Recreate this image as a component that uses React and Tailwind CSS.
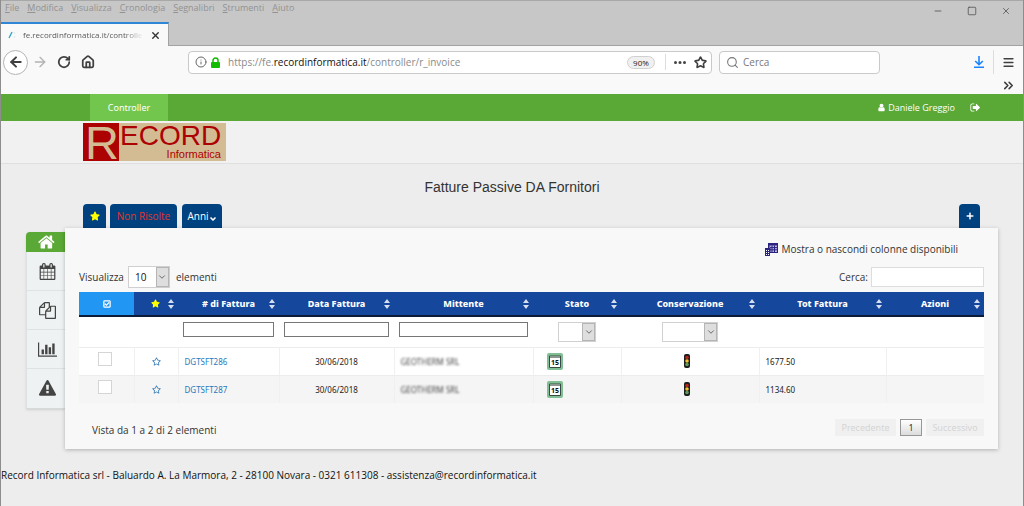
import { FaStar, FaRegStar, FaPlus, FaRegCheckSquare } from 'react-icons/fa';
import {
  ArrowLeft,
  ArrowRight,
  RotateCw,
  ChevronDown,
  ChevronsRight,
  Home,
  Info,
  Menu,
  Minus,
  Search,
  Square,
  Star,
  X,
} from 'lucide-react';

const PATHS = {
  home: 'M1408 992v480q0 26-19 45t-45 19h-384v-384h-256v384h-384q-26 0-45-19t-19-45v-480q0-1 .5-3t.5-3l575-474 575 474q1 2 1 6zm223-69l-62 74q-8 9-21 11h-3q-13 0-21-7l-692-577-692 577q-12 8-24 7-13-2-21-11l-62-74q-8-10-7-23.5t11-21.5l719-599q32-26 76-26t76 26l244 204v-195q0-14 9-23t23-9h192q14 0 23 9t9 23v408l219 182q10 8 11 21.5t-7 23.5z',
  calendar:
    'M192 1664h288v-288h-288v288zm352 0h320v-288h-320v288zm-352-352h288v-320h-288v320zm352 0h320v-320h-320v320zm-352-384h288v-288h-288v288zm736 736h320v-288h-320v288zm-384-736h320v-288h-320v288zm768 736h288v-288h-288v288zm-384-352h320v-320h-320v320zm-352-864v-288q0-13-9.5-22.5t-22.5-9.5h-64q-13 0-22.5 9.5t-9.5 22.5v288q0 13 9.5 22.5t22.5 9.5h64q13 0 22.5-9.5t9.5-22.5zm736 864h288v-320h-288v320zm-384-384h320v-288h-320v288zm384 0h288v-288h-288v288zm32-480v-288q0-13-9.5-22.5t-22.5-9.5h-64q-13 0-22.5 9.5t-9.5 22.5v288q0 13 9.5 22.5t22.5 9.5h64q13 0 22.5-9.5t9.5-22.5zm384-64v1280q0 52-38 90t-90 38h-1408q-52 0-90-38t-38-90v-1280q0-52 38-90t90-38h128v-96q0-66 47-113t113-47h64q66 0 113 47t47 113v96h384v-96q0-66 47-113t113-47h64q66 0 113 47t47 113v96h128q52 0 90 38t38 90z',
  files:
    'M1696 384q40 0 68 28t28 68v1216q0 40-28 68t-68 28h-960q-40 0-68-28t-28-68v-288h-544q-40 0-68-28t-28-68v-672q0-40 20-88t48-76l408-408q28-28 76-48t88-20h416q40 0 68 28t28 68v328q68-40 128-40h416zm-544 213l-299 299h299v-299zm-640-384l-299 299h299v-299zm196 647l316-316v-416h-384v416q0 40-28 68t-68 28h-416v640h512v-256q0-40 20-88t48-76zm956 804v-1152h-384v416q0 40-28 68t-68 28h-416v640h896z',
  chart:
    'M640 896v512h-256v-512h256zm384-512v1024h-256v-1024h256zm1024 1152v128h-2048v-1536h128v1408h1920zm-640-896v768h-256v-768h256zm384-384v1152h-256v-1152h256z',
  warning:
    'M1024 1375v-190q0-14-9.5-23.5t-22.5-9.5h-192q-13 0-22.5 9.5t-9.5 23.5v190q0 14 9.5 23.5t22.5 9.5h192q13 0 22.5-9.5t9.5-23.5zm-2-374l18-459q0-12-10-19-13-11-24-11h-220q-11 0-24 11-10 7-10 21l17 457q0 10 10 16.5t24 6.5h185q14 0 23.5-6.5t10.5-16.5zm-14-934l768 1408q35 63-2 126-17 29-46.5 46t-63.5 17h-1536q-34 0-63.5-17t-46.5-46q-37-63-2-126l768-1408q17-31 47-49t65-18 65 18 47 49z',
  user: 'M1536 1399q0 109-62.5 187t-150.5 78h-854q-88 0-150.5-78t-62.5-187q0-85 8.5-160.5t31.5-152 58.5-131 94-89 134.5-34.5q131 128 313 128t313-128q76 0 134.5 34.5t94 89 58.5 131 31.5 152 8.5 160.5zm-256-887q0 159-112.5 271.5t-271.5 112.5-271.5-112.5-112.5-271.5 112.5-271.5 271.5-112.5 271.5 112.5 112.5 271.5z',
  signOut:
    'M704 1440q0 4 1 20t.5 26.5-3 23.5-10 19.5-20.5 6.5h-320q-119 0-203.5-84.5t-84.5-203.5v-704q0-119 84.5-203.5t203.5-84.5h320q13 0 22.5 9.5t9.5 22.5q0 4 1 20t.5 26.5-3 23.5-10 19.5-20.5 6.5h-320q-66 0-113 47t-47 113v704q0 66 47 113t113 47h312l11.5 1 11.5 3 8 5.5 7 9 2 13.5zm928-544q0 26-19 45l-544 544q-19 19-45 19t-45-19-19-45v-288h-448q-26 0-45-19t-19-45v-384q0-26 19-45t45-19h448v-288q0-26 19-45t45-19 45 19l544 544q19 19 19 45z',
};

const MENU = ['File', 'Modifica', 'Visualizza', 'Cronologia', 'Segnalibri', 'Strumenti', 'Aiuto'];

const SIDEBAR = [
  { icon: 'calendar', label: 'Calendario' },
  { icon: 'files', label: 'Documenti' },
  { icon: 'chart', label: 'Statistiche' },
  { icon: 'warning', label: 'Avvisi' },
];

const COLUMNS = [
  { label: '# di Fattura', filter: 'text' },
  { label: 'Data Fattura', filter: 'text' },
  { label: 'Mittente', filter: 'text' },
  { label: 'Stato', filter: 'select', width: 'w-[38px]' },
  { label: 'Conservazione', filter: 'select', width: 'w-14' },
  { label: 'Tot Fattura' },
  { label: 'Azioni' },
];

const ROWS = [
  { id: 'DGTSFT286', date: '30/06/2018', sender: 'GEOTHERM SRL', total: '1677.50' },
  { id: 'DGTSFT287', date: '30/06/2018', sender: 'GEOTHERM SRL', total: '1134.60' },
];

function Glyph({ name, className }) {
  return (
    <svg viewBox={name === 'chart' ? '0 0 2048 1792' : '0 0 1792 1792'} fill="currentColor" className={className}>
      <path d={PATHS[name]} />
    </svg>
  );
}

function SortArrows() {
  return (
    <svg viewBox="0 0 6 10" className="w-[6px] h-[10px] shrink-0" fill="#d6def0">
      <path d="M3 0l3 4H0zM3 10l3-4H0z" />
    </svg>
  );
}

function SelectBox({ label, className, options }) {
  return (
    <span className={`relative inline-flex border border-[#d0d0d0] bg-white align-middle ${className}`}>
      <select
        aria-label={label}
        className="w-full h-full appearance-none bg-transparent pl-1.5 text-[10px] text-[#111]"
      >
        {options.map((option) => (
          <option key={option}>{option}</option>
        ))}
      </select>
      <span className="absolute right-0 inset-y-0 w-[13px] flex items-center justify-center bg-[#dedede] border border-[#b5b5b5] pointer-events-none">
        <ChevronDown className="w-[10px] h-[10px] text-[#555]" />
      </span>
    </span>
  );
}

function Logo() {
  return (
    <svg viewBox="0 0 143 38" className="w-[143px] h-[38px] overflow-visible" fontFamily="Liberation Sans, Arial, sans-serif">
      <rect width="143" height="38" fill="#d3bb93" />
      <rect width="36" height="38" fill="#ad0202" />
      <text x="2" y="36" fontSize="47" fill="#d3bb93">R</text>
      <text x="37" y="22" fontSize="28" fill="#ad0202">ECORD</text>
      <text x="138" y="35" fontSize="11" textAnchor="end" fill="#ad0202">Informatica</text>
    </svg>
  );
}

function BrowserChrome() {
  return (
    <header className="text-[#3f3f3f]">
      <div className="h-[46px] bg-[#c7c7c7] border-t border-t-[#a8a8a8] border-b border-b-[#a3a3a3] flex justify-between">
        <div className="flex flex-col justify-between">
          <nav className="flex gap-2 pl-1 pt-px text-[9px] leading-[12px] text-[#929292]">
            {MENU.map((item) => (
              <button key={item}>
                <span className="underline">{item[0]}</span>
                {item.slice(1)}
              </button>
            ))}
          </nav>
          <div className="w-[168px] h-6 -mb-px bg-[#f9f9fa] border-t-2 border-t-[#2f86d6] border-r border-r-[#a3a3a3] flex items-center px-[7px] gap-[7px] text-[8px] text-[#5a5a5a]">
            <svg viewBox="0 0 8 8" className="w-2 h-2 shrink-0" fill="none">
              <path d="M1 7L4 1" stroke="#35a8c4" strokeWidth="1.4" />
              <path d="M6 1l1 2M7 5L6 7" stroke="#d7e8ec" />
            </svg>
            <span className="flex-1 overflow-hidden whitespace-nowrap [mask-image:linear-gradient(to_right,black_85%,transparent)]">
              fe.recordinformatica.it/controller
            </span>
            <button aria-label="Chiudi scheda">
              <X className="w-[11px] h-[11px] text-[#333]" strokeWidth={3} />
            </button>
          </div>
        </div>
        <div className="flex gap-[24px] pr-3 pt-1 h-4 text-[#555]">
          <button aria-label="Riduci"><Minus className="w-[10px] h-[10px]" /></button>
          <button aria-label="Ingrandisci"><Square className="w-[10px] h-[10px]" /></button>
          <button aria-label="Chiudi"><X className="w-[10px] h-[10px]" /></button>
        </div>
      </div>

      <div className="bg-[#f9f9fa] h-12 flex flex-col">
        <div className="flex items-center h-8 pl-0.5 pr-2">
          <button aria-label="Indietro" className="w-[25px] h-[25px] shrink-0 rounded-full border border-[#b5b5b5] bg-white flex items-center justify-center">
            <ArrowLeft className="w-4 h-4" strokeWidth={3} />
          </button>
          <button aria-label="Avanti" className="ml-1 text-[#b2b2b2]"><ArrowRight className="w-4 h-4" /></button>
          <button aria-label="Ricarica" className="ml-[9px]"><RotateCw className="w-[14px] h-[14px]" strokeWidth={3} /></button>
          <button aria-label="Pagina iniziale" className="ml-[10px]"><Home className="w-[14px] h-[14px]" strokeWidth={3} /></button>

          <div className="ml-[93px] flex-1 h-[23px] bg-white border border-[#c9c9c9] rounded-sm flex items-center pl-1.5 pr-1">
            <Info className="w-3 h-3 text-[#666]" />
            <svg viewBox="0 0 9 11" className="w-[9px] h-[11px] ml-1 mr-2" fill="none">
              <path d="M2 6V3.5a2.5 2.5 0 015 0V6" stroke="#12bc00" strokeWidth="1.5" />
              <rect y="5" width="9" height="6" rx="1" fill="#12bc00" />
            </svg>
            <div className="flex-1 text-[10px] leading-[14px] text-[#8a8a8a] whitespace-nowrap">
              https://fe.<span className="text-[#111]">recordinformatica.it</span>/controller/r_invoice
            </div>
            <span className="w-7 h-[13px] rounded-full border border-[#d0d0d0] bg-[#f0f0f0] text-[8px] leading-[11px] text-center text-[#222]">
              90%
            </span>
            <span className="w-px h-4 bg-[#ddd] ml-[10px]" />
            <button aria-label="Azioni pagina" className="ml-2">
              <svg viewBox="0 0 12 3" className="w-3 h-[3px]" fill="#444">
                <circle cx="1.5" cy="1.5" r="1.5" />
                <circle cx="6" cy="1.5" r="1.5" />
                <circle cx="10.5" cy="1.5" r="1.5" />
              </svg>
            </button>
            <button aria-label="Aggiungi ai segnalibri" className="ml-2">
              <Star className="w-[13px] h-[13px]" strokeWidth={3} />
            </button>
          </div>
          <label className="ml-[7px] w-[161px] h-[23px] bg-white border border-[#c9c9c9] rounded-sm flex items-center pl-1.5 gap-1">
            <Search className="w-[13px] h-[13px] text-[#777] shrink-0" />
            <input aria-label="Cerca sul web" placeholder="Cerca" className="w-full text-[10px] placeholder:text-[#777] outline-none" />
          </label>
          <button aria-label="Download" className="ml-[94px]">
            <svg viewBox="0 0 10 12" className="w-[10px] h-3" fill="none" stroke="#1a84ff" strokeWidth="1.6">
              <path d="M5 0v8.5M1.2 5L5 8.7 8.8 5M0 11.2h10" />
            </svg>
          </button>
          <span className="w-px h-6 bg-[#ddd] ml-[9px]" />
          <button aria-label="Menu" className="ml-2"><Menu className="w-[13px] h-[13px]" strokeWidth={3} /></button>
        </div>
        <button aria-label="Altri strumenti" className="self-end mr-[7px]"><ChevronsRight className="w-[15px] h-[15px]" strokeWidth={2.5} /></button>
      </div>
    </header>
  );
}

function InvoiceTable() {
  return (
    <table className="w-full table-fixed border-collapse font-['Noto_Sans',sans-serif] text-[8px] leading-[12px] text-[#222]">
      <colgroup>
        <col className="w-[55px]" />
        <col className="w-[44px]" />
        <col className="w-[101px]" />
        <col className="w-[115px]" />
        <col className="w-[139px]" />
        <col className="w-[88px]" />
        <col className="w-[138px]" />
        <col className="w-[127px]" />
        <col className="w-[98px]" />
      </colgroup>
      <thead className="text-[9px]">
        <tr className="h-6 bg-[#15479c] text-white border-b-2 border-[#0b1b38]">
          <th className="bg-[#2196f3]">
            <FaRegCheckSquare className="w-2 h-2 mx-auto" stroke="currentColor" strokeWidth={30} />
          </th>
          <th>
            <div className="flex items-center justify-end gap-2 pr-1">
              <FaStar className="w-[9px] h-[9px] text-[#ffff00]" />
              <SortArrows />
            </div>
          </th>
          {COLUMNS.map(({ label }) => (
            <th key={label} className="font-extrabold">
              <div className="flex items-center pl-[10px] pr-1">
                <span className="flex-1">{label}</span>
                <SortArrows />
              </div>
            </th>
          ))}
        </tr>
        <tr className="h-[31px] bg-white">
          <td />
          <td />
          {COLUMNS.map(({ label, filter, width }) => (
            <td key={label} className="px-[5px] text-center">
              {filter === 'text' && (
                <input aria-label={`Filtra ${label}`} className="block w-full h-[15px] mb-1 border border-[#767676] bg-white px-1" />
              )}
              {filter === 'select' && (
                <SelectBox label={`Filtra ${label}`} className={`h-5 ${width}`} options={['']} />
              )}
            </td>
          ))}
        </tr>
      </thead>
      <tbody>
        {ROWS.map((row) => (
          <tr
            key={row.id}
            className="h-7 bg-white even:bg-[#f5f5f5] border-t border-[#ececec] [&>td+td]:border-l [&>td]:border-[#f0f0f0]"
          >
            <td className="pr-0.5">
              <input
                type="checkbox"
                aria-label={`Seleziona ${row.id}`}
                className="block mx-auto mb-1 w-[14px] h-[14px] appearance-none border border-[#d5d5d5] bg-white"
              />
            </td>
            <td>
              <button aria-label="Preferito" className="block mx-auto">
                <FaRegStar className="w-[9px] h-[9px] text-[#337ab7]" />
              </button>
            </td>
            <td className="pl-1.5 pt-0.5"><a href="#fattura" className="text-[#2878bd]">{row.id}</a></td>
            <td className="text-center pt-0.5">{row.date}</td>
            <td className="pl-1.5 pt-0.5"><span className="text-[#444] blur-[1px]">{row.sender}</span></td>
            <td className="pl-[13px]">
              <svg viewBox="0 0 16 17" className="w-4 h-[17px]">
                <rect width="16" height="17" rx="2" fill="#7fbf93" />
                <path d="M2.5 3h11v11.5h-11z" fill="#fff" stroke="#3a4a40" />
                <path d="M3 4h10" stroke="#8a968e" strokeWidth="2" />
                <text x="8" y="12" textAnchor="middle" fontSize="7" fontWeight="bold" fill="#111">15</text>
              </svg>
            </td>
            <td className="pr-1.5">
              <svg viewBox="0 0 6 14" className="w-[6px] h-[14px] mx-auto">
                <rect width="6" height="14" rx="2" fill="#1c1c1c" />
                <circle cx="3" cy="3.5" r="1.8" fill="#b5281c" />
                <circle cx="3" cy="7" r="1.8" fill="#f2c230" />
                <circle cx="3" cy="10.5" r="1.8" fill="#5f9a5c" />
              </svg>
            </td>
            <td className="pl-1.5 pt-0.5">{row.total}</td>
            <td />
          </tr>
        ))}
      </tbody>
    </table>
  );
}

export default function App() {
  return (
    <div className="min-h-screen bg-[#ededed] border-l border-[#8d8d8d] border-r font-['Open_Sans','Noto_Sans',sans-serif] text-[#333]">
      <BrowserChrome />

      <nav className="h-[27px] bg-[#5aa835] flex items-center justify-between pl-[89px] pr-[42px] text-white text-[9px]">
        <a href="#controller" className="h-full w-[78px] flex items-center justify-center bg-[#73c64d] text-[9px] font-['Noto_Sans',sans-serif]">
          Controller
        </a>
        <div className="flex items-center gap-[15px]">
          <a href="#utente" className="flex items-center gap-0.5">
            <Glyph name="user" className="w-[9px] h-[9px]" />
            Daniele Greggio
          </a>
          <a href="#esci" aria-label="Esci"><Glyph name="signOut" className="w-[11px] h-[11px]" /></a>
        </div>
      </nav>

      <div className="h-[43px] bg-[#f1f1f1] border-b border-[#dfdfdf] pl-[82px] pt-0.5">
        <Logo />
      </div>

      <h1 className="pt-[14px] text-center font-['Liberation_Sans',Arial,sans-serif] text-[14px] leading-[18px]">
        Fatture Passive DA Fornitori
      </h1>

      <main className="px-[25px] pt-2">
        <div className="flex gap-1 pl-[57px] pr-[18px] text-[10px] text-white">
          <button aria-label="Preferiti" className="w-[23px] h-6 rounded-t-sm bg-[#00417f] flex items-center justify-center">
            <FaStar className="w-[10px] h-[10px] text-[#ffff00]" />
          </button>
          <button className="h-6 w-[67px] rounded-t-sm bg-[#00417f] text-[#e0362c]">Non Risolte</button>
          <button className="h-6 w-10 ml-px rounded-t-sm bg-[#00417f] flex items-center justify-center">
            Anni
            <ChevronDown className="w-2 h-2 mt-1.5" strokeWidth={5} />
          </button>
          <button aria-label="Aggiungi" className="ml-auto w-[21px] h-6 rounded-t-sm bg-[#00417f] flex items-center justify-center">
            <FaPlus className="w-2 h-2" />
          </button>
        </div>

        <div className="flex items-start">
          <nav className="w-[39px] mt-1 rounded-tl-sm border-b border-[#d5dadb] bg-[#eef2f3] shadow-sm text-[#444]">
            <a href="#home" aria-label="Home" className="h-5 rounded-tl-sm bg-[#5aa835] text-white flex items-center justify-center pl-0.5">
              <Glyph name="home" className="w-[18px] h-[18px]" />
            </a>
            {SIDEBAR.map(({ icon, label }) => (
              <a
                key={icon}
                href={`#${icon}`}
                aria-label={label}
                className="h-[39px] flex items-center justify-center pl-0.5 border-l border-b border-[#dde3e4] last:border-b-0"
              >
                <Glyph name={icon} className={icon === 'chart' ? 'w-[19px] h-[17px]' : 'w-[17px] h-[17px]'} />
              </a>
            ))}
          </nav>

          <section className="flex-1 min-w-0 h-[221px] bg-[#f8f8f8] shadow-[0_1px_4px_rgba(0,0,0,0.25)] px-[14px] pt-3 text-[10px]">
            <div className="flex justify-end pr-[26px]">
              <button className="h-[18px] flex items-center gap-[3px]">
                <svg viewBox="0 0 13 13" className="w-[13px] h-[13px]">
                  <path d="M3 0h10v10H3zM0 5h5v8H0z" fill="#2a2380" />
                  <path d="M4.5 5V2.5h7.5V9H5.5V5z" fill="#b9b6e0" />
                  <path d="M7 2.5V9M9.5 2.5V9M5 4.6h7M5 6.8h7" stroke="#2a2380" />
                  <path d="M1 7h1v1H1zM3 7h1v1H3zM1 9h1v1H1zM3 9h1v1H3zM1 11h1v1H1zM3 11h1v1H3z" fill="#fff" />
                </svg>
                Mostra o nascondi colonne disponibili
              </button>
            </div>

            <div className="flex items-center justify-between h-[22px] mt-2 mb-1">
              <div className="flex items-center gap-1">
                Visualizza
                <SelectBox label="Elementi per pagina" className="w-[42px] h-[22px]" options={['10', '25', '50']} />
                <span className="pl-0.5">elementi</span>
              </div>
              <label className="flex items-center gap-[3px]">
                Cerca:
                <input className="w-[113px] h-5 border border-[#ddd] bg-white px-1" />
              </label>
            </div>

            <InvoiceTable />

            <div className="flex items-start justify-between pl-[13px] pt-4">
              <p className="pt-1 leading-[15px]">Vista da 1 a 2 di 2 elementi</p>
              <div className="flex gap-1 text-[9px] font-['Noto_Sans',sans-serif]">
                <button disabled className="h-[17px] w-[61px] bg-[#f0f0f0] text-[#d5d5d5]">Precedente</button>
                <button className="h-[17px] w-[22px] border border-[#979797] bg-linear-to-b from-white to-[#dcdcdc]">1</button>
                <button disabled className="h-[17px] w-[58px] bg-[#f0f0f0] text-[#d5d5d5]">Successivo</button>
              </div>
            </div>
          </section>
        </div>
      </main>

      <footer className="pt-[19px] text-[10px] leading-[15px] text-[#111]">
        Record Informatica srl - Baluardo A. La Marmora, 2 - 28100 Novara - 0321 611308 - assistenza@recordinformatica.it
      </footer>
    </div>
  );
}
